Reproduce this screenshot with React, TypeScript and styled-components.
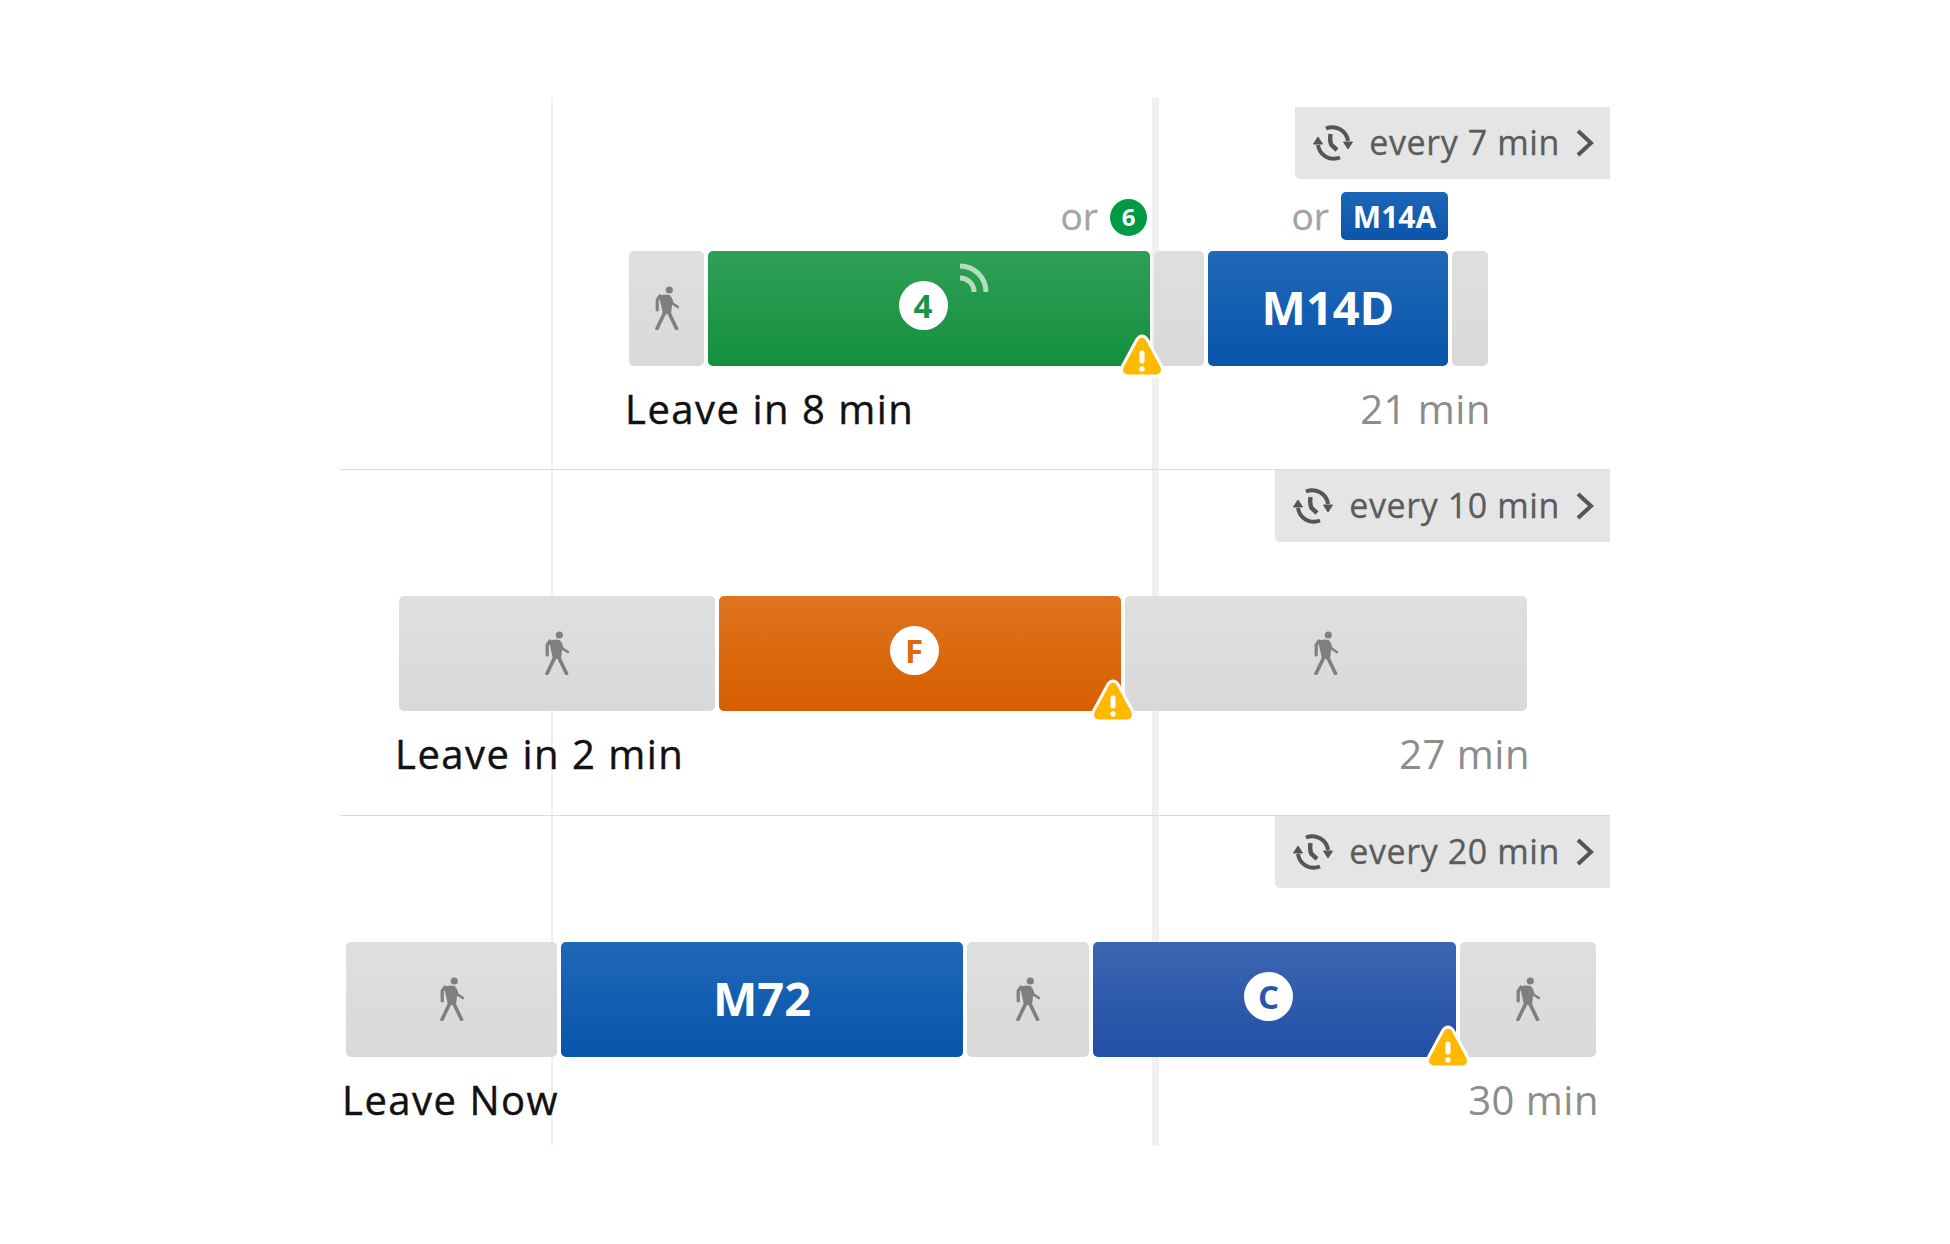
import React from "react";
import styled, { createGlobalStyle } from "styled-components";

const GlobalStyle = createGlobalStyle`
  html, body {
    margin: 0;
    padding: 0;
    background: #fff;
  }
  body {
    font-family: "Open Sans", "Liberation Sans", sans-serif;
  }
`;

const Page = styled.div`
  width: 1950px;
  height: 1244px;
  padding: 107px 0 0 340px;
  box-sizing: border-box;
  overflow: hidden;
`;

const Timeline = styled.div`
  position: relative;
  width: 1270px;
`;

const NowLine = styled.div<{ $left: number; $width: number }>`
  position: absolute;
  top: -9px;
  left: ${(p) => p.$left}px;
  width: ${(p) => p.$width}px;
  height: 1048px;
  background: #f0f0f0;
`;

const Row = styled.div<{ $height: number; $last?: boolean }>`
  position: relative;
  display: flex;
  flex-direction: column;
  box-sizing: border-box;
  height: ${(p) => p.$height}px;
  border-bottom: ${(p) => (p.$last ? "0" : "1px solid #dcdcdc")};
`;

const Frequency = styled.div`
  display: flex;
  align-items: center;
  align-self: flex-end;
  height: 72px;
  padding: 0 16px 0 18px;
  gap: 16px;
  box-sizing: border-box;
  background: #e5e5e5;
  border-bottom-left-radius: 5px;
  color: #5b5b5b;
  font-size: 34px;
  letter-spacing: 0.6px;
  -webkit-text-stroke: 0.3px #5b5b5b;
  white-space: nowrap;
`;

const FrequencyText = styled.span`
  margin-bottom: 2px;
`;

const Trip = styled.div<{ $top: number; $offset: number }>`
  display: flex;
  flex-direction: column;
  align-self: flex-start;
  margin: ${(p) => p.$top}px 0 0 ${(p) => p.$offset}px;
`;

const Bar = styled.div`
  display: flex;
  gap: 4px;
  height: 115px;
`;

const Segment = styled.div<{ $w: number; $top: string; $bottom: string }>`
  position: relative;
  display: flex;
  align-items: center;
  justify-content: center;
  flex: none;
  width: ${(p) => p.$w}px;
  border-radius: 5px;
  background: linear-gradient(${(p) => p.$top}, ${(p) => p.$bottom});
`;

const BusName = styled.div`
  margin-bottom: 2px;
  color: #fff;
  font-size: 47px;
  font-weight: 700;
  line-height: 1;
`;

const RouteDisc = styled.div<{ $color: string }>`
  position: relative;
  display: flex;
  align-items: center;
  justify-content: center;
  width: 49px;
  height: 49px;
  margin: 0 12px 7px 0;
  border-radius: 50%;
  background: #fff;
  color: ${(p) => p.$color};
  font-size: 33px;
  font-weight: 700;
  line-height: 1;
`;

const Signal = styled.svg`
  position: absolute;
  left: 60px;
  top: -18px;
`;

const Warning = styled.svg`
  position: absolute;
  right: -15.5px;
  bottom: -12.5px;
  z-index: 2;
`;

const Alternate = styled.div<{ $inset: number }>`
  position: absolute;
  right: ${(p) => p.$inset}px;
  bottom: calc(100% + 11px);
  display: flex;
  align-items: center;
  gap: 12px;
  height: 48px;
  color: #a3a3a3;
  font-size: 37px;
  line-height: 50px;
  -webkit-text-stroke: 0.3px #a3a3a3;
  white-space: nowrap;
`;

const SmallDisc = styled.div`
  display: flex;
  align-items: center;
  justify-content: center;
  width: 37px;
  height: 37px;
  margin-top: 2px;
  border-radius: 50%;
  background: #009a44;
  color: #fff;
  font-size: 24px;
  font-weight: 700;
  -webkit-text-stroke: 0;
`;

const SmallBus = styled.div`
  display: flex;
  align-items: center;
  justify-content: center;
  width: 107px;
  height: 48px;
  padding-top: 2px;
  box-sizing: border-box;
  border-radius: 5px;
  background: linear-gradient(#1c66b8, #0b56ab);
  color: #fff;
  font-size: 30px;
  font-weight: 700;
  -webkit-text-stroke: 0;
`;

const Footer = styled.div`
  display: flex;
  justify-content: space-between;
  align-items: center;
  height: 42px;
  margin: 21px -3px 0 -4px;
  font-size: 40px;
`;

const Leave = styled.span`
  color: #111;
  letter-spacing: 1.5px;
  -webkit-text-stroke: 0.4px #111;
`;

const Duration = styled.span`
  color: #8c8c8c;
  letter-spacing: 0.5px;
`;

const WalkGlyph = styled.svg`
  margin-bottom: 2px;
`;

const WalkIcon = () => (
  <WalkGlyph width="24" height="44" viewBox="0 0 24 44" fill="none">
    <circle cx="14.3" cy="4" r="3.6" fill="#7f7f7f" />
    <path d="M4 10 Q9 7.5 15 9 L17.5 15 L16 28 L8 28 Z" fill="#7f7f7f" />
    <g stroke="#7f7f7f" strokeLinecap="round" strokeLinejoin="round">
      <path d="M5 10 L2.2 14 L2.2 24" strokeWidth="3.2" />
      <path d="M15.5 12 L17.5 17.5 L22.8 21" strokeWidth="2.6" />
      <path d="M9.5 27 L2 42.5" strokeWidth="3.6" />
      <path d="M14 27 L21.5 42.5" strokeWidth="3.6" />
    </g>
  </WalkGlyph>
);

const FrequencyIcon = () => (
  <svg width="40" height="38" viewBox="0 0 40 38" fill="none" stroke="#555" strokeWidth="4">
    <path d="M13 4.5 A16 16 0 0 1 35 17" />
    <path d="M27 33.5 A16 16 0 0 1 5 21" />
    <path d="M30.5 18 L35 25 L39.5 18 Z" fill="#555" strokeWidth="1" />
    <path d="M0.5 20 L5 13 L9.5 20 Z" fill="#555" strokeWidth="1" />
    <path d="M17.5 10 Q16.5 17 18.5 21 L24 26" strokeWidth="4.4" />
  </svg>
);

const Chevron = () => (
  <svg width="18" height="28" viewBox="0 0 18 28" fill="none" stroke="#555" strokeWidth="4">
    <path d="M2 2 L15 14 L2 26" />
  </svg>
);

const WarningIcon = () => (
  <Warning width="48" height="46" viewBox="0 0 48 46">
    <path
      d="M24 3 C26.5 3 28 4.5 29.5 7 L43.5 33 C46 38.5 43.5 43 38 43 L10 43 C4.5 43 2 38.5 4.5 33 L18.5 7 C20 4.5 21.5 3 24 3 Z"
      fill="#ffb900"
      stroke="#fff"
      strokeWidth="3"
    />
    <rect x="21.5" y="17.5" width="5" height="13" rx="2.2" fill="#fff" />
    <circle cx="24" cy="36" r="2.7" fill="#fff" />
  </Warning>
);

const SignalIcon = () => (
  <Signal width="32" height="32" viewBox="0 0 32 32" fill="none" stroke="#fff" strokeOpacity="0.65" strokeWidth="5">
    <path d="M1 3 A26 26 0 0 1 27 29" />
    <path d="M1 15 A14 14 0 0 1 15 29" />
  </Signal>
);

const Walk = ({ w }: { w: number }) => (
  <Segment $w={w} $top="#dfdfdf" $bottom="#d9d9d9">
    <WalkIcon />
  </Segment>
);

const EmptyWalk = ({ w }: { w: number }) => <Segment $w={w} $top="#dfdfdf" $bottom="#d9d9d9" />;

const GREEN = { $top: "#2f9f56", $bottom: "#14903d" };
const BLUE = { $top: "#2068b8", $bottom: "#0855ab" };
const ORANGE = { $top: "#e0741f", $bottom: "#d65e00" };
const INDIGO = { $top: "#3b66b2", $bottom: "#234fa5" };

const FrequencyBadge = ({ minutes }: { minutes: number }) => (
  <Frequency>
    <FrequencyIcon />
    <FrequencyText>every {minutes} min</FrequencyText>
    <Chevron />
  </Frequency>
);

export default function App() {
  return (
    <Page>
      <GlobalStyle />
      <Timeline>
        <NowLine $left={211} $width={2} />
        <NowLine $left={812} $width={7} />

        <Row $height={363}>
          <FrequencyBadge minutes={7} />
          <Trip $top={72} $offset={289}>
            <Bar>
              <Walk w={75} />
              <Segment $w={442} {...GREEN}>
                <Alternate $inset={3}>
                  or <SmallDisc>6</SmallDisc>
                </Alternate>
                <RouteDisc $color="#17934a">
                  4
                  <SignalIcon />
                </RouteDisc>
                <WarningIcon />
              </Segment>
              <EmptyWalk w={50} />
              <Segment $w={240} {...BLUE}>
                <Alternate $inset={0}>
                  or <SmallBus>M14A</SmallBus>
                </Alternate>
                <BusName>M14D</BusName>
              </Segment>
              <EmptyWalk w={36} />
            </Bar>
            <Footer>
              <Leave>Leave in 8 min</Leave>
              <Duration>21 min</Duration>
            </Footer>
          </Trip>
        </Row>

        <Row $height={346}>
          <FrequencyBadge minutes={10} />
          <Trip $top={54} $offset={59}>
            <Bar>
              <Walk w={316} />
              <Segment $w={402} {...ORANGE}>
                <RouteDisc $color="#d96a10">F</RouteDisc>
                <WarningIcon />
              </Segment>
              <Walk w={402} />
            </Bar>
            <Footer>
              <Leave>Leave in 2 min</Leave>
              <Duration>27 min</Duration>
            </Footer>
          </Trip>
        </Row>

        <Row $height={320} $last>
          <FrequencyBadge minutes={20} />
          <Trip $top={54} $offset={6}>
            <Bar>
              <Walk w={211} />
              <Segment $w={402} {...BLUE}>
                <BusName>M72</BusName>
              </Segment>
              <Walk w={122} />
              <Segment $w={363} {...INDIGO}>
                <RouteDisc $color="#2c55a7">C</RouteDisc>
                <WarningIcon />
              </Segment>
              <Walk w={136} />
            </Bar>
            <Footer>
              <Leave>Leave Now</Leave>
              <Duration>30 min</Duration>
            </Footer>
          </Trip>
        </Row>
      </Timeline>
    </Page>
  );
}
